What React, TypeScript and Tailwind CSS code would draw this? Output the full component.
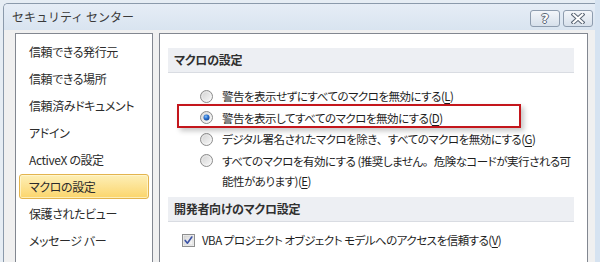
import React from "react";

const FONT = "font-['Noto_Sans_CJK_JP',sans-serif]";
const PALT = "[font-feature-settings:'palt']";

function Radio({ checked }: { checked?: boolean }) {
  return (
    <svg width="13" height="13" viewBox="0 0 13 13" className="shrink-0">
      <defs>
        <linearGradient id={checked ? "rgc" : "rgu"} x1="0" y1="0" x2="1" y2="1">
          <stop offset="0" stopColor="#cfcfcf" />
          <stop offset="1" stopColor="#fbfbfb" />
        </linearGradient>
        <radialGradient id="dot" cx="0.4" cy="0.35" r="0.7">
          <stop offset="0" stopColor="#8fc2f5" />
          <stop offset="0.45" stopColor="#2f78d6" />
          <stop offset="1" stopColor="#15418f" />
        </radialGradient>
      </defs>
      <circle cx="6.5" cy="6.5" r="6" fill={`url(#${checked ? "rgc" : "rgu"})`} stroke="#8c8c8c" strokeWidth="1" />
      <circle cx="6.5" cy="6.5" r="4.6" fill="none" stroke="#ffffff" strokeOpacity="0.5" strokeWidth="0.8" />
      {checked && <circle cx="6.5" cy="6.5" r="3" fill="url(#dot)" />}
    </svg>
  );
}

function CheckBox() {
  return (
    <svg width="13" height="13" viewBox="0 0 13 13" className="shrink-0">
      <defs>
        <linearGradient id="cbg" x1="0" y1="0" x2="1" y2="1">
          <stop offset="0" stopColor="#d8d8d8" />
          <stop offset="1" stopColor="#fafafa" />
        </linearGradient>
      </defs>
      <rect x="0.5" y="0.5" width="12" height="12" fill="#f4f4f4" stroke="#8e8f8f" />
      <rect x="2" y="2" width="9" height="9" fill="url(#cbg)" stroke="#c9c9c9" strokeWidth="0.6" />
      <path d="M3.2 6.4 L5.4 9.2 L9.8 3" fill="none" stroke="#3c53a6" strokeWidth="1.6" strokeLinejoin="round" strokeLinecap="round" />
    </svg>
  );
}

function U({ c }: { c: string }) {
  return (
    <>
      (<span className="underline underline-offset-2">{c}</span>)
    </>
  );
}

function P({ c }: { c: string }) {
  return <span className="[font-feature-settings:normal]">{c}</span>;
}

const items = [
  "信頼できる発行元",
  "信頼できる場所",
  "信頼済みドキュメント",
  "アドイン",
  "ActiveX の設定",
  "マクロの設定",
  "保護されたビュー",
  "メッセージ バー",
  "ファイル制限機能の設定",
];

function Band({ children }: { children: React.ReactNode }) {
  return (
    <div className="ml-[8px] w-[406px] h-[25px] bg-[#edeff3] border-b border-[#d9dce2] flex items-center pl-[6px] text-[12px] tracking-[-0.3px] font-bold text-[#303030]">
      {children}
    </div>
  );
}

export default function App() {
  return (
    <div className={`w-[600px] h-[262px] overflow-hidden bg-[#e6edf4] flex ${FONT} ${PALT}`}>
      <div className="w-[3px] shrink-0" />
      <div className="w-[592px] shrink-0 mt-[3px] border-l border-t border-[#8b9aab] rounded-tl-[5px] flex flex-col overflow-hidden">
        {/* title bar */}
        <div className="h-[26px] shrink-0 bg-gradient-to-b from-[#e6edf6] to-[#d9e4f0] flex items-start">
          <div className="pl-[8px] h-[26px] flex items-center text-[12px] text-[#3a3a3a] [font-feature-settings:normal]">
            セキュリティ センター
          </div>
          <div className="ml-auto flex gap-[3px] pr-[2px] pt-[6px]">
            <div className="w-[30px] h-[17px] rounded-[3px] border border-[#8e9cae] bg-gradient-to-b from-[#f3f6fa] to-[#d7e0eb] flex items-center justify-center">
              <span className="text-[13px] leading-none font-bold text-white [text-shadow:1px_0_#5b6675,-1px_0_#5b6675,0_1px_#5b6675,0_-1px_#5b6675] font-['DejaVu_Sans',sans-serif]">
                ?
              </span>
            </div>
            <div className="w-[30px] h-[17px] rounded-[3px] border border-[#8e9cae] bg-gradient-to-b from-[#f3f6fa] to-[#d7e0eb] flex items-center justify-center">
              <svg width="14" height="11" viewBox="0 0 14 11">
                <path d="M2.5 1.5 L11.5 9.5 M11.5 1.5 L2.5 9.5" stroke="#5b6675" strokeWidth="4" strokeLinecap="square" />
                <path d="M2.5 1.5 L11.5 9.5 M11.5 1.5 L2.5 9.5" stroke="#ffffff" strokeWidth="2" strokeLinecap="square" />
              </svg>
            </div>
          </div>
        </div>
        {/* body */}
        <div className="flex-1 bg-[#f0f0f0] flex pl-[11px] pt-[3px] gap-[6px]">
          {/* left nav */}
          <div className="w-[138px] shrink-0 h-[240px] bg-white border border-[#828790] pt-[4px] overflow-hidden">
            {items.map((t) => {
              const sel = t === "マクロの設定";
              return (
                <div key={t} className="h-[27px] px-[3px] py-[1px]">
                  <div
                    className={
                      "h-[25px] flex items-center pl-[9px] rounded-[3px] border text-[12px] tracking-[-0.4px] text-[#2b2b2b] whitespace-nowrap " +
                      (sel
                        ? "border-[#e3b44e] bg-gradient-to-b from-[#fdefb6] to-[#fbd56a] shadow-[inset_0_0_0_1px_rgba(255,248,215,0.7)]"
                        : "border-transparent")
                    }
                  >
                    {t}
                  </div>
                </div>
              );
            })}
          </div>
          {/* right content */}
          <div className="w-[429px] shrink-0 h-[240px] bg-white border border-[#828790] pt-[14px] text-[11.5px] tracking-[-0.5px] text-[#1e1e1e]">
            <Band>マクロの設定</Band>
            <div className="mt-[13px] flex flex-col gap-[1.5px] leading-[20px]">
              <div className="flex items-start pl-[40px]">
                <div className="h-[20px] flex items-center mr-[9px]"><Radio /></div>
                <span>警告を表示せずにすべてのマクロを無効にする<U c="L" /></span>
              </div>
              <div className="relative flex items-start pl-[40px]">
                <div className="absolute left-[17px] top-[-4px] w-[344px] h-[24px] border-2 border-[#c4161c] shadow-[3px_3px_5px_rgba(0,0,0,0.22)]" />
                <div className="h-[20px] flex items-center mr-[9px]"><Radio checked /></div>
                <span>警告を表示してすべてのマクロを無効にする<U c="D" /></span>
              </div>
              <div className="flex items-start pl-[40px]">
                <div className="h-[20px] flex items-center mr-[9px]"><Radio /></div>
                <span>デジタル署名されたマクロを除き<P c="、" />すべてのマクロを無効にする<U c="G" /></span>
              </div>
              <div className="flex items-start pl-[40px]">
                <div className="h-[20px] flex items-center mr-[9px]"><Radio /></div>
                <span className="whitespace-nowrap">
                  すべてのマクロを有効にする (推奨しません<P c="。" />危険なコードが実行される可
                  <br />
                  能性があります)<U c="E" />
                </span>
              </div>
            </div>
            <div className="mt-[6.5px]">
              <Band>開発者向けのマクロ設定</Band>
            </div>
            <div className="mt-[8px] flex items-start pl-[22px] leading-[20px]">
              <div className="h-[20px] flex items-center mr-[7px]"><CheckBox /></div>
              <span>VBA プロジェクト オブジェクト モデルへのアクセスを信頼する<U c="V" /></span>
            </div>
          </div>
        </div>
      </div>
      <div className="w-[5px] shrink-0 bg-[#d6e3f1]" />
    </div>
  );
}
